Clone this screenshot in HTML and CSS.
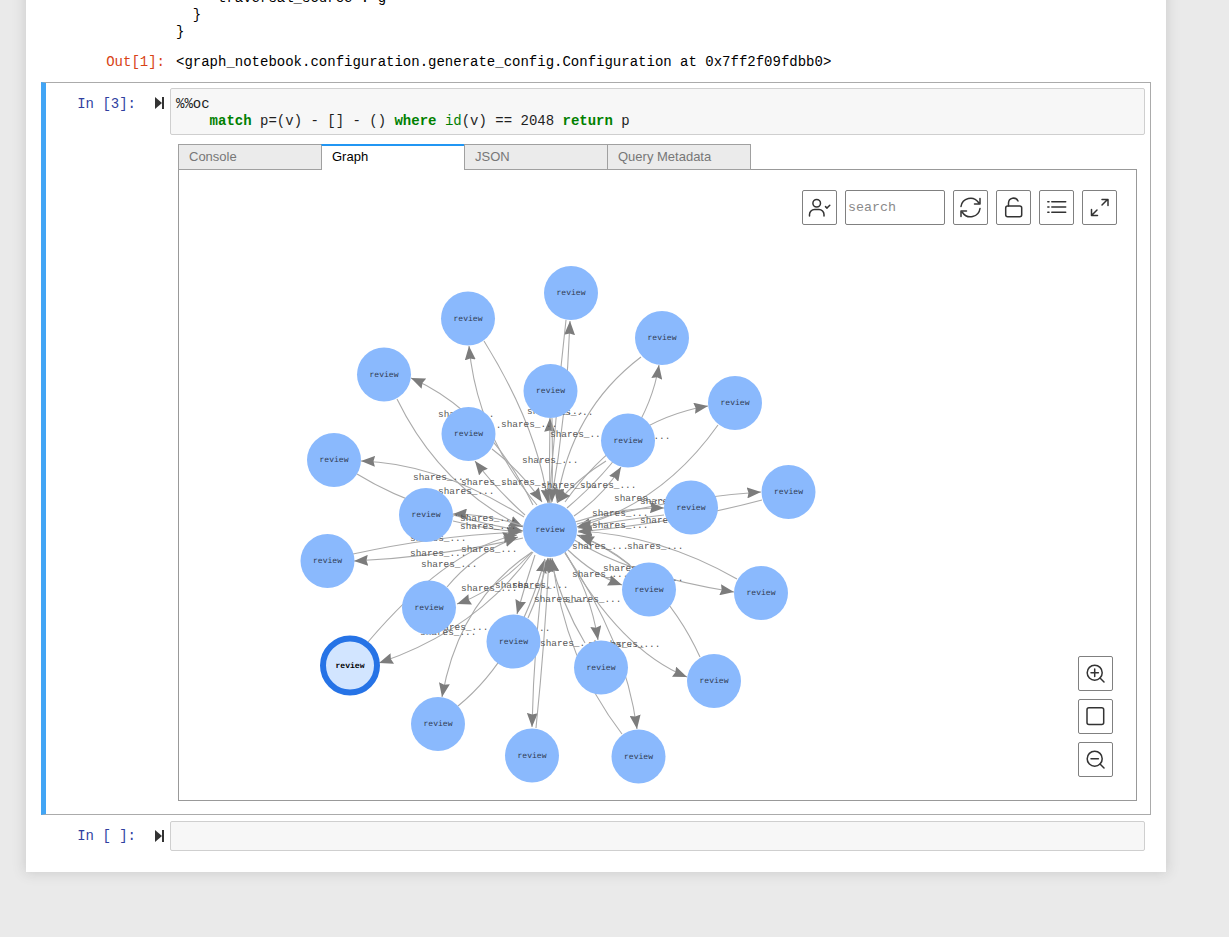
FILE: index.html
```html
<!DOCTYPE html>
<html lang="en">
<head>
<meta charset="utf-8">
<title>Notebook</title>
<link rel="stylesheet" href="styles.css">
</head>
<body>
<main class="notebook">
  <pre class="stream">     traversal_source : g
  }
}</pre>
  <div class="out-row">
    <div class="out-prompt">Out[1]:</div>
    <pre class="out-text">&lt;graph_notebook.configuration.generate_config.Configuration at 0x7ff2f09fdbb0&gt;</pre>
  </div>

  <section class="cell cell-selected">
    <div class="cell-row">
      <div class="prompt">In&nbsp;[3]:</div>
      <svg class="run" viewBox="0 0 9 12"><path d="M0 0L7 6L0 12Z"/><rect x="7" width="2" height="12"/></svg>
      <pre class="input"><span>%%oc</span>
    <b class="kw">match</b> p=(v) - [] - () <b class="kw">where</b> <span class="fn">id</span>(v) == 2048 <b class="kw">return</b> p</pre>
    </div>
    <div class="widget">
      <div class="tabs">
        <div class="tab">Console</div>
        <div class="tab tab-active">Graph</div>
        <div class="tab">JSON</div>
        <div class="tab">Query Metadata</div>
      </div>
      <div class="panel">
        <svg class="graph" viewBox="179 170 957 630" width="957" height="630">
          <defs>
            <marker id="arrow" viewBox="0 0 14 11" refX="14" refY="5.5" markerWidth="14" markerHeight="11" markerUnits="userSpaceOnUse" orient="auto">
              <path class="arrowhead" d="M0 0L14 5.5L0 11L1.5 5.5Z"/>
            </marker>
          </defs>
          <g class="edges">
            <path d="M537 505Q477 434 469 346"/>
            <path d="M484 341Q538 428 548 503"/>
            <path d="M533 505Q488 412 411 378"/>
            <path d="M397 399Q440 487 523 527"/>
            <path d="M524 517Q438 463 361 461"/>
            <path d="M357 474Q420 513 523 531"/>
            <path d="M523 526Q488 514 453 514"/>
            <path d="M453 521Q490 530 522 532"/>
            <path d="M525 515Q497 490 475 461"/>
            <path d="M492 449Q522 472 542 502"/>
            <path d="M551 503Q567 412 570 321"/>
            <path d="M566 320Q556 410 549 503"/>
            <path d="M550 503Q549 460 550 418"/>
            <path d="M552 418Q553 460 552 502"/>
            <path d="M567 508Q647 440 659 365"/>
            <path d="M641 357Q571 410 557 502"/>
            <path d="M565 502Q623 420 708 406"/>
            <path d="M718 425Q662 504 577 527"/>
            <path d="M574 516Q603 496 621 467"/>
            <path d="M606 461Q578 478 557 503"/>
            <path d="M577 524Q670 498 761 492"/>
            <path d="M762 500Q680 522 578 532"/>
            <path d="M575 522Q620 507 664 508"/>
            <path d="M664 515Q620 520 578 528"/>
            <path d="M523 538Q440 557 354 561"/>
            <path d="M353 554Q440 535 521 532"/>
            <path d="M532 552Q497 590 457 604"/>
            <path d="M447 587Q476 552 518 537"/>
            <path d="M533 552Q477 630 379 663"/>
            <path d="M368 642Q448 548 517 535"/>
            <path d="M532 552Q459 600 442 697"/>
            <path d="M458 706Q518 657 545 559"/>
            <path d="M535 555Q525 585 517 614"/>
            <path d="M528 618Q540 592 548 558"/>
            <path d="M545 560Q534 640 532 727"/>
            <path d="M536 728Q545 640 549 558"/>
            <path d="M568 550Q594 575 622 585"/>
            <path d="M630 565Q606 545 577 535"/>
            <path d="M571 538Q628 575 734 592"/>
            <path d="M737 579Q660 535 578 531"/>
            <path d="M565 552Q620 650 687 677"/>
            <path d="M700 657Q660 570 580 536"/>
            <path d="M565 553Q590 590 598 640"/>
            <path d="M585 643Q562 605 550 558"/>
            <path d="M565 553Q625 640 637 729"/>
            <path d="M622 734Q565 660 552 558"/>
          </g>
          <g class="edge-labels">
            <text x="438" y="417">shares_...</text>
            <text x="527" y="414">shares_...</text>
            <text x="537" y="415">shares_...</text>
            <text x="445" y="428">shares_...</text>
            <text x="501" y="427">shares_...</text>
            <text x="550" y="437">shares_...</text>
            <text x="614" y="439">shares_...</text>
            <text x="522" y="463">shares_...</text>
            <text x="413" y="480">shares_...</text>
            <text x="461" y="485">shares_...</text>
            <text x="501" y="485">shares_...</text>
            <text x="541" y="488">shares_...</text>
            <text x="580" y="488">shares_...</text>
            <text x="438" y="494">shares_...</text>
            <text x="614" y="501">shares_...</text>
            <text x="640" y="504">shares_...</text>
            <text x="592" y="516">shares_...</text>
            <text x="592" y="528">shares_...</text>
            <text x="640" y="523">shares_...</text>
            <text x="414" y="516">shares_...</text>
            <text x="460" y="521">shares_...</text>
            <text x="460" y="529">shares_...</text>
            <text x="410" y="541">shares_...</text>
            <text x="410" y="556">shares_...</text>
            <text x="461" y="552">shares_...</text>
            <text x="421" y="567">shares_...</text>
            <text x="461" y="591">shares_...</text>
            <text x="495" y="588">shares_...</text>
            <text x="512" y="588">shares_...</text>
            <text x="534" y="602">shares_...</text>
            <text x="565" y="602">shares_...</text>
            <text x="432" y="630">shares_...</text>
            <text x="420" y="635">shares_...</text>
            <text x="494" y="631">shares_...</text>
            <text x="540" y="646">shares_...</text>
            <text x="588" y="647">shares_...</text>
            <text x="604" y="647">shares_...</text>
            <text x="572" y="549">shares_...</text>
            <text x="627" y="549">shares_...</text>
            <text x="572" y="577">shares_...</text>
            <text x="603" y="571">shares_...</text>
            <text x="627" y="581">shares_...</text>
          </g>
          <g class="nodes">
            <circle cx="571" cy="293" r="27"/><text x="571" y="295">review</text>
            <circle cx="468" cy="318.5" r="27"/><text x="468" y="320.5">review</text>
            <circle cx="662" cy="338" r="27"/><text x="662" y="340">review</text>
            <circle cx="384" cy="374.5" r="27"/><text x="384" y="376.5">review</text>
            <circle cx="735" cy="403" r="27"/><text x="735" y="405">review</text>
            <circle cx="550.5" cy="391" r="27"/><text x="550.5" y="393">review</text>
            <circle cx="468.5" cy="434" r="27"/><text x="468.5" y="436">review</text>
            <circle cx="628" cy="440.5" r="27"/><text x="628" y="442.5">review</text>
            <circle cx="334" cy="460" r="27"/><text x="334" y="462">review</text>
            <circle cx="788.5" cy="492" r="27"/><text x="788.5" y="494">review</text>
            <circle cx="691" cy="507.5" r="27"/><text x="691" y="509.5">review</text>
            <circle cx="426" cy="515" r="27"/><text x="426" y="517">review</text>
            <circle cx="550" cy="530" r="27"/><text x="550" y="532">review</text>
            <circle cx="327.5" cy="561" r="27"/><text x="327.5" y="563">review</text>
            <circle cx="761" cy="593" r="27"/><text x="761" y="595">review</text>
            <circle cx="649" cy="589.5" r="27"/><text x="649" y="591.5">review</text>
            <circle cx="429" cy="607.5" r="27"/><text x="429" y="609.5">review</text>
            <circle cx="513.5" cy="641.5" r="27"/><text x="513.5" y="643.5">review</text>
            <circle cx="601" cy="667.5" r="27"/><text x="601" y="669.5">review</text>
            <circle cx="714" cy="681" r="27"/><text x="714" y="683">review</text>
            <circle cx="438" cy="724" r="27"/><text x="438" y="726">review</text>
            <circle cx="532" cy="755.5" r="27"/><text x="532" y="757.5">review</text>
            <circle cx="638.5" cy="756.5" r="27"/><text x="638.5" y="758.5">review</text>
            <g class="node-selected">
              <circle cx="350" cy="665.5" r="27"/><text x="350" y="667.5">review</text>
            </g>
          </g>
        </svg>
        <div class="toolbar">
          <button class="tool"><svg viewBox="0 0 35 35"><circle cx="14.7" cy="13.3" r="3.8"/><path d="M7.5 26v-1.5a5 5 0 0 1 5-5h4.5a5 5 0 0 1 5 5V26M23.5 16.6l1.5 1.5 2.8-2.9"/></svg></button>
          <input class="search" type="text" placeholder="search">
          <button class="tool"><svg viewBox="0 0 35 35"><path d="M8 16.5A9.6 9.6 0 0 1 25.5 12.500M27 18.500A9.6 9.6 0 0 1 9.500 22.500M27 8.500v5.500h-5.500M8 26.500V21h5.500"/></svg></button>
          <button class="tool"><svg viewBox="0 0 35 35"><rect x="9.700" y="16" width="16" height="10.700" rx="2"/><path d="M12.500 16v-3a5 5 0 0 1 9.500-2"/></svg></button>
          <button class="tool"><svg viewBox="0 0 35 35"><path d="M12.800 11.700H26.700M12.800 17H26.700M12.800 22.300H26.700"/><path d="M8.800 11.700h1.200M8.800 17h1.200M8.800 22.300h1.200"/></svg></button>
          <button class="tool"><svg viewBox="0 0 35 35"><path d="M9.500 25.500L15 20M20 15L25.500 9.500M20 9.500h6v6M9.500 19.500v6h6"/></svg></button>
        </div>
        <div class="zoombar">
          <button class="tool"><svg viewBox="0 0 35 35"><circle cx="16.700" cy="16.700" r="7.500"/><path d="M22 22L26 26M16.700 13v7.400M13 16.700h7.400"/></svg></button>
          <button class="tool"><svg viewBox="0 0 35 35"><rect x="9" y="8.700" width="16.700" height="16.700" rx="2"/></svg></button>
          <button class="tool"><svg viewBox="0 0 35 35"><circle cx="16.700" cy="16.700" r="7.500"/><path d="M22 22L26 26M13 16.700h7.400"/></svg></button>
        </div>
      </div>
    </div>
  </section>

  <section class="cell cell-empty">
    <div class="cell-row">
      <div class="prompt">In&nbsp;[&nbsp;]:</div>
      <svg class="run" viewBox="0 0 9 12"><path d="M0 0L7 6L0 12Z"/><rect x="7" width="2" height="12"/></svg>
      <div class="input input-blank"></div>
    </div>
  </section>
</main>
</body>
</html>
```

FILE: styles.css
```css
* { box-sizing: border-box; }

html, body {
  margin: 0;
  height: 937px;
  overflow: hidden;
  background: #eaeaea;
}

pre {
  margin: 0;
  font: inherit;
}

.notebook {
  width: 1140px;
  height: 882px;
  margin: -10px 0 0 26px;
  padding-bottom: 21px;
  background: #fff;
  box-shadow: 0 0 12px 1px rgba(87, 87, 87, 0.2);
  font-family: "Liberation Mono", monospace;
  font-size: 14px;
  line-height: 17px;
  color: #000;
}

.stream {
  padding-left: 150px;
}

.out-row {
  display: flex;
  margin-top: 13px;
}

.out-prompt {
  width: 139px;
  text-align: right;
  color: #d84315;
}

.out-text {
  margin-left: 11px;
}

.cell {
  margin-left: 15px;
  width: 1110px;
}

.cell-selected {
  height: 733px;
  margin-top: 11px;
  padding: 5px 5px 0 0;
  border: 1px solid #ababab;
  border-left: 5px solid #42a5f5;
}

.cell-selected .prompt {
  margin-top: 8px;
}

.cell-empty {
  margin-top: 6px;
  padding: 0 6px 0 5px;
}

.cell-row {
  display: flex;
  align-items: flex-start;
}

.prompt {
  width: 90px;
  margin-top: 7px;
  text-align: right;
  color: #303f9f;
}

.run {
  flex: none;
  width: 9px;
  height: 12px;
  margin: 9px 6px 0 19px;
  fill: #333;
}

.input {
  flex: 1;
  height: 47px;
  padding: 7px 5px 4px;
  border: 1px solid #cfcfcf;
  border-radius: 2px;
  background: #f7f7f7;
  color: #1f1f1f;
}

.input-blank {
  height: 30px;
}

.kw {
  color: #008000;
  font-weight: bold;
}

.fn {
  color: #008000;
}

.widget {
  margin: 9px 0 0 132px;
  font-family: "Liberation Sans", Arial, sans-serif;
}

.tabs {
  display: flex;
  position: relative;
  z-index: 1;
}

.tab {
  width: 144px;
  height: 26px;
  margin-right: -1px;
  padding: 4px 10px 0;
  border: 1px solid #a0a0a0;
  background: #ebebeb;
  font-size: 13px;
  line-height: 15px;
  color: #777;
}

.tab-active {
  border-top: 2px solid #2196f3;
  border-bottom: 0;
  padding-top: 3px;
  background: #fff;
  color: #000;
}

.panel {
  position: relative;
  width: 959px;
  height: 632px;
  margin-top: -1px;
  padding: 20px 19px 0 0;
  border: 1px solid #999;
  background: #fff;
}

.graph {
  position: absolute;
  top: 0;
  left: 0;
  font-family: "Liberation Mono", monospace;
  text-rendering: geometricPrecision;
}

.edges path {
  fill: none;
  stroke: #aaa;
  stroke-width: 1.1;
  marker-end: url(#arrow);
}

.arrowhead {
  fill: #7c7c7c;
}

.edge-labels text {
  font-size: 9.4px;
  fill: #555;
}

.nodes circle {
  fill: #8ab9fd;
}

.nodes text {
  font-size: 8.1px;
  text-anchor: middle;
  fill: #2f3a52;
}

.node-selected circle {
  fill: #d2e5ff;
  stroke: #2673e6;
  stroke-width: 6;
}

.nodes .node-selected text {
  font-weight: bold;
  fill: #000;
}

.toolbar {
  position: relative;
  display: flex;
  justify-content: flex-end;
  gap: 8px;
}

.zoombar {
  position: absolute;
  right: 23px;
  bottom: 23px;
  display: flex;
  flex-direction: column;
  gap: 8px;
}

.tool {
  display: block;
  width: 35px;
  height: 35px;
  padding: 0;
  border: 1px solid #808080;
  border-radius: 2px;
  background: #fff;
}

.tool svg {
  display: block;
  width: 35px;
  height: 35px;
  margin: -1px;
  fill: none;
  stroke: #333;
  stroke-width: 1.5;
  stroke-linecap: round;
  stroke-linejoin: round;
}

.search {
  width: 100px;
  height: 35px;
  padding: 1px 2px;
  border: 1px solid #808080;
  border-radius: 2px;
  background: #fff;
  font-family: "Liberation Mono", monospace;
  font-size: 13.33px;
}

.search::placeholder {
  color: #8a8a8a;
  opacity: 1;
}
```
